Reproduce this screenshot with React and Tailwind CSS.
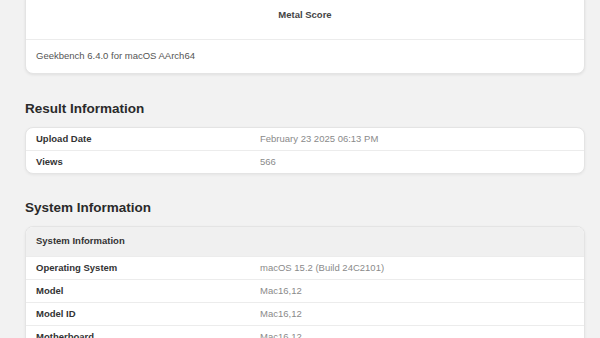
import React from "react";

const resultRows = [
    { label: "Upload Date", value: "February 23 2025 06:13 PM" },
    { label: "Views", value: "566" },
];

const systemRows = [
    { label: "Operating System", value: "macOS 15.2 (Build 24C2101)" },
    { label: "Model", value: "Mac16,12" },
    { label: "Model ID", value: "Mac16,12" },
    { label: "Motherboard", value: "Mac16,12" },
];

function InfoRow({ label, value }) {
    return (
        <div className="flex h-[23px] items-center border-t border-[#ececec] first:h-[22px] first:border-t-0">
            <div className="w-[234px] pl-[10px] text-[9.5px] font-semibold text-[#333]">{label}</div>
            <div className="text-[9.5px] text-[#8a8a8a]">{value}</div>
        </div>
    );
}

export default function App() {
    return (
        <div
            className="h-[338px] overflow-hidden bg-[#f2f2f2] pl-[25px] pr-[15px]"
            style={{ fontFamily: '"Liberation Sans", Arial, sans-serif' }}
        >
            {/* Score card (top cut off) */}
            <div className="-mt-[9px] rounded-[8px] border border-[#e4e4e4] bg-white shadow-[0_1px_3px_rgba(0,0,0,0.08)]">
                <div className="flex h-[48px] items-center justify-center border-b border-[#ececec] text-[9.5px] font-semibold text-[#444]">
                    Metal Score
                </div>
                <div className="flex h-[33px] items-center pl-[10px] text-[9.5px] text-[#555]">
                    Geekbench 6.4.0 for macOS AArch64
                </div>
            </div>

            {/* Result Information */}
            <h2 className="mt-[26px] text-[13.5px] font-bold leading-[18px] text-[#2a2a2a]">Result Information</h2>
            <div className="mt-[9px] overflow-hidden rounded-[8px] border border-[#e4e4e4] bg-white shadow-[0_1px_3px_rgba(0,0,0,0.06)]">
                {resultRows.map((r) => (
                    <InfoRow key={r.label} {...r} />
                ))}
            </div>

            {/* System Information */}
            <h2 className="mt-[25px] text-[13.5px] font-bold leading-[18px] text-[#2a2a2a]">System Information</h2>
            <div className="mt-[9px] overflow-hidden rounded-[8px] border border-[#e4e4e4] bg-white shadow-[0_1px_3px_rgba(0,0,0,0.06)]">
                <div className="flex h-[29px] items-center bg-[#f0f0f0] pl-[10px] text-[9.5px] font-semibold text-[#333]">
                    System Information
                </div>
                {systemRows.map((r) => (
                    <InfoRow key={r.label} {...r} />
                ))}
            </div>
        </div>
    );
}
